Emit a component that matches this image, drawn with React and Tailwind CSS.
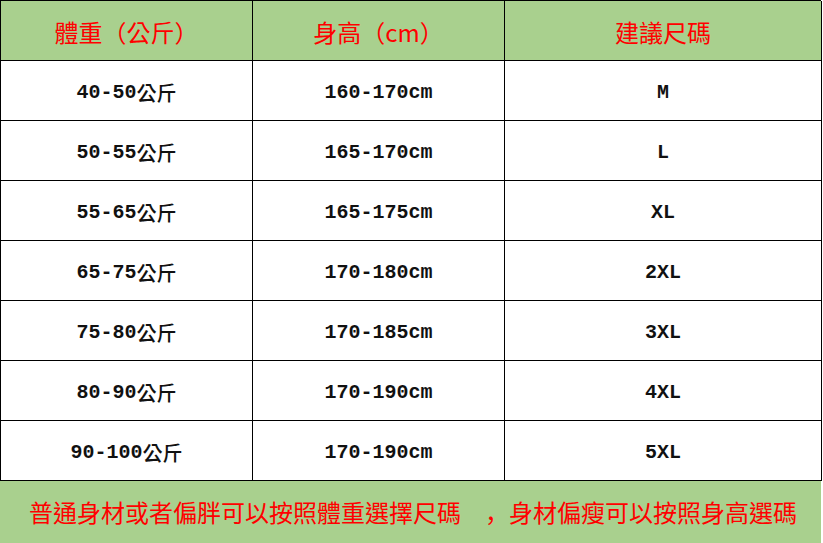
import React from 'react';

const rows = [
  ['40-50', '160-170cm', 'M'],
  ['50-55', '165-170cm', 'L'],
  ['55-65', '165-175cm', 'XL'],
  ['65-75', '170-180cm', '2XL'],
  ['75-80', '170-185cm', '3XL'],
  ['80-90', '170-190cm', '4XL'],
  ['90-100', '170-190cm', '5XL'],
];

const cjk = '"Noto Sans CJK TC", "Noto Sans CJK SC", sans-serif';
const cjkSc = '"Noto Sans CJK SC", sans-serif';

const App = () => {
  return (
    <div className="min-h-screen bg-white">
      <div className="w-[821px]">
        {/* 表格 */}
        <div className="grid grid-cols-[252px_252px_317px] border-l border-t border-black">
          {/* 表頭 */}
          {['體重（公斤）', '身高（cm）', '建議尺碼'].map((h) => (
            <div
              key={h}
              className="h-[60px] flex items-center justify-center bg-[#a9d08e] border-r border-b border-black text-[#ff0000] text-[24px] pt-[2px]"
              style={{ fontFamily: cjk }}
            >
              {h}
            </div>
          ))}

          {/* 內容 */}
          {rows.map(([w, h, s]) => (
            <React.Fragment key={w}>
              <div className="h-[60px] flex items-center justify-center border-r border-b border-black pt-[4px]">
                <span className="font-['Liberation_Mono',monospace] font-bold text-[20px] text-[#111]">{w}</span>
                <span className="font-medium text-[20px] text-[#111]" style={{ fontFamily: cjk }}>公斤</span>
              </div>
              <div className="h-[60px] flex items-center justify-center border-r border-b border-black pt-[4px]">
                <span className="font-['Liberation_Mono',monospace] font-bold text-[20px] text-[#111]">{h}</span>
              </div>
              <div className="h-[60px] flex items-center justify-center border-r border-b border-black pt-[4px]">
                <span className="font-['Liberation_Mono',monospace] font-bold text-[20px] text-[#111]">{s}</span>
              </div>
            </React.Fragment>
          ))}
        </div>

        {/* 說明 */}
        <div
          className="h-[62px] flex items-center pl-[29px] bg-[#a9d08e] text-[#ff0000] text-[24px] whitespace-nowrap"
          style={{ fontFamily: cjk }}
        >
          普通身材或者偏胖可以按照體重選擇尺碼　<span style={{ fontFamily: cjkSc }}>，</span>身材偏瘦可以按照身高選碼
        </div>
      </div>
    </div>
  );
};

export default App;
